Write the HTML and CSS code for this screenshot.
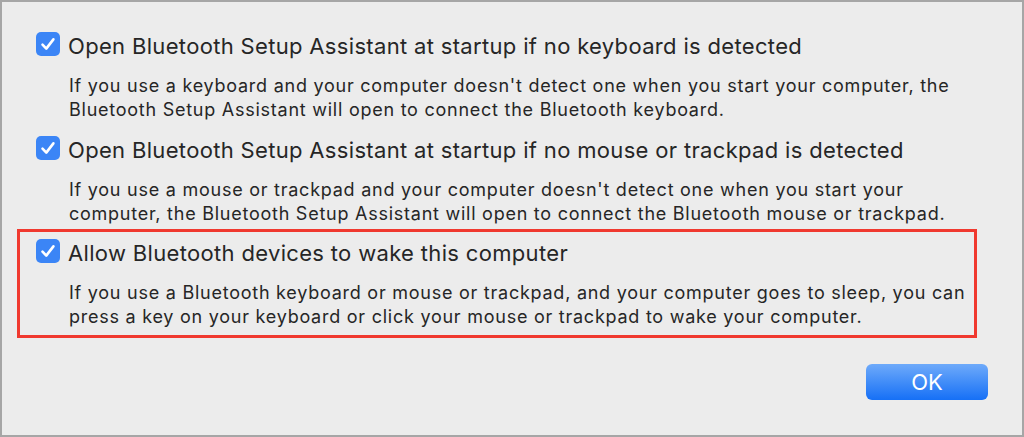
FILE: index.html
```html
<!DOCTYPE html>
<html>
<head>
    <title>Bluetooth Advanced Settings</title>
    <meta charset="utf-8">
    <link rel="stylesheet" href="styles.css">
</head>
<body>
    <div class="dialog">
        <div class="option">
            <div class="option-row">
                <span class="checkbox">
                    <svg viewBox="0 0 24 24" width="24" height="24"><path d="M6.5 12.6 L10.3 16.6 L17.4 7.4" /></svg>
                </span>
                <span class="option-title">Open Bluetooth Setup Assistant at startup if no keyboard is detected</span>
            </div>
            <p class="option-desc">If you use a keyboard and your computer doesn't detect one when you start your computer, the<br>Bluetooth Setup Assistant will open to connect the Bluetooth keyboard.</p>
        </div>

        <div class="option">
            <div class="option-row">
                <span class="checkbox">
                    <svg viewBox="0 0 24 24" width="24" height="24"><path d="M6.5 12.6 L10.3 16.6 L17.4 7.4" /></svg>
                </span>
                <span class="option-title">Open Bluetooth Setup Assistant at startup if no mouse or trackpad is detected</span>
            </div>
            <p class="option-desc">If you use a mouse or trackpad and your computer doesn't detect one when you start your<br>computer, the Bluetooth Setup Assistant will open to connect the Bluetooth mouse or trackpad.</p>
        </div>

        <!-- highlighted option -->
        <div class="option highlight">
            <div class="option-row">
                <span class="checkbox">
                    <svg viewBox="0 0 24 24" width="24" height="24"><path d="M6.5 12.6 L10.3 16.6 L17.4 7.4" /></svg>
                </span>
                <span class="option-title">Allow Bluetooth devices to wake this computer</span>
            </div>
            <p class="option-desc">If you use a Bluetooth keyboard or mouse or trackpad, and your computer goes to sleep, you can<br>press a key on your keyboard or click your mouse or trackpad to wake your computer.</p>
        </div>

        <div class="buttons">
            <button class="btn-ok">OK</button>
        </div>
    </div>
</body>
</html>
```

FILE: styles.css
```css
html, body {
    margin: 0;
    padding: 0;
}
body {
    background: #ececec;
    font-family: "Inter", "Noto Sans", sans-serif;
    color: #262626;
}
.dialog {
    box-sizing: border-box;
    height: 437px;
    border: 2px solid #a6a6a6;
    padding: 30px 34px 0 34px;
    display: flex;
    flex-direction: column;
}
.option {
    display: flex;
    flex-direction: column;
}
.option + .option {
    margin-top: 14px;
}
.option-row {
    display: flex;
    align-items: flex-start;
    gap: 8px;
}
.checkbox {
    width: 24px;
    height: 24px;
    flex: none;
    border-radius: 5px;
    background: #3b85f6;
    display: flex;
}
.checkbox svg path {
    fill: none;
    stroke: #ffffff;
    stroke-width: 2.6;
    stroke-linecap: round;
    stroke-linejoin: round;
}
.option-title {
    font-size: 22px;
    line-height: 28px;
    letter-spacing: 0.33px;
    white-space: nowrap;
}
.option-desc {
    margin: 14px 0 0 33px;
    font-size: 18px;
    line-height: 24px;
    letter-spacing: 0.75px;
    white-space: nowrap;
}
.option.highlight {
    margin: 3px 11px 0 -19px;
    border: 3px solid #f0392f;
    padding: 7px 0 6px 16px;
}
.buttons {
    display: flex;
    justify-content: flex-end;
    margin-top: 26px;
}
.btn-ok {
    width: 122px;
    height: 36px;
    border: none;
    border-radius: 6px;
    background: linear-gradient(to bottom, #6eaafa, #1670f6);
    color: #ffffff;
    font-family: "Inter", "Noto Sans", sans-serif;
    font-size: 22px;
    padding: 0;
}
```
